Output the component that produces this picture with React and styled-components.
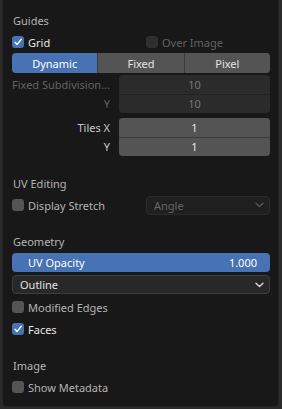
import styled, { createGlobalStyle } from 'styled-components';

const GlobalStyle = createGlobalStyle`
  html, body {
    margin: 0;
    padding: 0;
    background-color: #2a2a2a;
  }
  body {
    font-family: "Noto Sans", "DejaVu Sans", sans-serif;
    font-size: 11px;
  }
`;

const Panel = styled.div`
  display: flex;
  flex-direction: column;
  box-sizing: border-box;
  margin: 0px 3px 0px 2px;
  height: 407px;
  padding: 9px 8px 0px 9px;
  background-color: #181818;
  border: 1px solid #242424;
  border-top: none;
  border-radius: 0px 0px 5px 5px;
`;

const Section = styled.div`
  display: flex;
  flex-direction: column;
  margin-top: ${(p) => p.$top || 0}px;
`;

const Heading = styled.div`
  display: flex;
  align-items: center;
  height: 22px;
  padding-left: 1px;
  color: #b4b4b4;
`;

const Row = styled.div`
  display: flex;
  align-items: center;
  height: 22px;
  margin-top: ${(p) => p.$top || 0}px;
`;

const TwoCol = styled.div`
  display: grid;
  grid-template-columns: 1fr 1fr;
  column-gap: 10px;
  align-items: center;
  height: 22px;
`;

const CheckWrap = styled.label`
  display: flex;
  align-items: center;
  gap: 4px;
  color: ${(p) => (p.$disabled ? '#626262' : p.$on ? '#e6e6e6' : '#b4b4b4')};
`;

const Box = styled.span`
  display: flex;
  align-items: center;
  justify-content: center;
  width: 12px;
  height: 12px;
  border-radius: 3px;
  background-color: ${(p) => (p.$on ? '#4772b3' : p.$disabled ? '#2f2f2f' : '#545454')};
`;

const Segmented = styled.div`
  display: flex;
  height: 20px;
  border-radius: 4px;
  overflow: hidden;
  background-color: #3a3a3a;
  gap: 1px;
`;

const Segment = styled.div`
  flex: 1;
  display: flex;
  align-items: center;
  justify-content: center;
  background-color: ${(p) => (p.$on ? '#4772b3' : '#545454')};
  color: ${(p) => (p.$on ? '#ffffff' : '#e2e2e2')};
`;

const FieldGroup = styled.div`
  display: grid;
  grid-template-columns: 107px 1fr;
  margin-top: ${(p) => p.$top || 0}px;
`;

const FieldLabel = styled.div`
  display: flex;
  align-items: center;
  justify-content: flex-end;
  height: 19px;
  padding-right: 9px;
  white-space: nowrap;
  color: ${(p) => (p.$disabled ? '#626262' : '#c8c8c8')};
`;

const FieldStack = styled.div`
  display: flex;
  flex-direction: column;
  gap: 1px;
  border-radius: 4px;
  overflow: hidden;
  background-color: ${(p) => (p.$disabled ? '#222222' : '#3c3c3c')};
`;

const NumField = styled.div`
  display: flex;
  align-items: center;
  justify-content: center;
  height: 18.5px;
  background-color: ${(p) => (p.$disabled ? '#2b2b2b' : '#545454')};
  color: ${(p) => (p.$disabled ? '#777777' : '#e6e6e6')};
`;

const Dropdown = styled.div`
  display: flex;
  align-items: center;
  justify-content: space-between;
  box-sizing: border-box;
  height: 19px;
  margin-top: ${(p) => p.$top || 0}px;
  padding: 0px 5px 0px 7px;
  border-radius: 4px;
  background-color: ${(p) => (p.$disabled ? '#1f1f1f' : '#282828')};
  border: 1px solid ${(p) => (p.$disabled ? '#2a2a2a' : '#3d3d3d')};
  color: ${(p) => (p.$disabled ? '#666666' : '#e2e2e2')};
`;

const Slider = styled.div`
  display: flex;
  align-items: center;
  justify-content: space-between;
  height: 19px;
  margin-top: 1px;
  padding: 0px 13px 0px 16px;
  border-radius: 4px;
  background-color: #4772b3;
  color: #ffffff;
`;

const Check = () => (
  <svg width="10" height="10" viewBox="0 0 10 10">
    <path d="M2 5.3 L4 7.5 L8.3 2.3" fill="none" stroke="#ffffff" strokeWidth="1.4" strokeLinecap="round" strokeLinejoin="round" />
  </svg>
);

const Chevron = ({ color }) => (
  <svg width="9" height="6" viewBox="0 0 9 6">
    <path d="M1 1.2 L4.5 4.6 L8 1.2" fill="none" stroke={color} strokeWidth="1.4" strokeLinecap="round" strokeLinejoin="round" />
  </svg>
);

const Checkbox = ({ on, disabled, children }) => (
  <CheckWrap $on={on} $disabled={disabled}>
    <Box $on={on} $disabled={disabled}>{on && <Check />}</Box>
    {children}
  </CheckWrap>
);

const App = () => {
  return (
    <>
      <GlobalStyle />
      <Panel>
        <Section>
          <Heading>Guides</Heading>
          <TwoCol>
            <Checkbox on>Grid</Checkbox>
            <Checkbox disabled>Over Image</Checkbox>
          </TwoCol>
          <Segmented>
            <Segment $on>Dynamic</Segment>
            <Segment>Fixed</Segment>
            <Segment>Pixel</Segment>
          </Segmented>
          <FieldGroup $top={2}>
            <div>
              <FieldLabel $disabled>Fixed Subdivision...</FieldLabel>
              <FieldLabel $disabled>Y</FieldLabel>
            </div>
            <FieldStack $disabled>
              <NumField $disabled>10</NumField>
              <NumField $disabled>10</NumField>
            </FieldStack>
          </FieldGroup>
          <FieldGroup $top={5}>
            <div>
              <FieldLabel>Tiles X</FieldLabel>
              <FieldLabel>Y</FieldLabel>
            </div>
            <FieldStack>
              <NumField>1</NumField>
              <NumField>1</NumField>
            </FieldStack>
          </FieldGroup>
        </Section>

        <Section $top={16}>
          <Heading>UV Editing</Heading>
          <TwoCol>
            <Checkbox>Display Stretch</Checkbox>
            <Dropdown $disabled>
              <span>Angle</span>
              <Chevron color="#555555" />
            </Dropdown>
          </TwoCol>
        </Section>

        <Section $top={14}>
          <Heading>Geometry</Heading>
          <Slider>
            <span>UV Opacity</span>
            <span>1.000</span>
          </Slider>
          <Dropdown $top={3}>
            <span>Outline</span>
            <Chevron color="#d8d8d8" />
          </Dropdown>
          <Row $top={2}>
            <Checkbox>Modified Edges</Checkbox>
          </Row>
          <Row>
            <Checkbox on>Faces</Checkbox>
          </Row>
        </Section>

        <Section $top={14}>
          <Heading>Image</Heading>
          <Row>
            <Checkbox>Show Metadata</Checkbox>
          </Row>
        </Section>
      </Panel>
    </>
  );
};

export default App;
